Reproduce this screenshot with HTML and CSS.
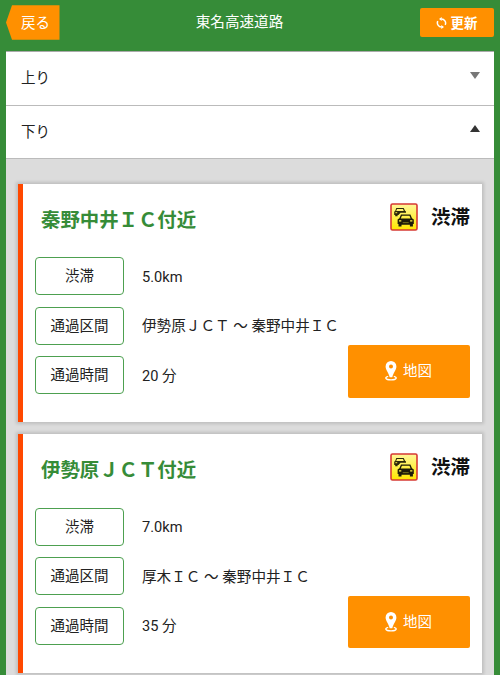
FILE: index.html
```html
<!DOCTYPE html>
<html lang="ja">
<head>
    <meta charset="UTF-8">
    <meta name="viewport" content="width=device-width, initial-scale=1.0">
    <title>東名高速道路</title>
    <link rel="stylesheet" href="styles.css">
</head>
<body>
    <svg class="symbols" width="0" height="0">
        <symbol id="jam" viewBox="0 0 28 28">
            <linearGradient id="jamBg" x1="0" y1="0" x2="0" y2="1">
                <stop offset="0" stop-color="#fff79a"/>
                <stop offset="0.5" stop-color="#fff04a"/>
                <stop offset="1" stop-color="#ffe600"/>
            </linearGradient>
            <rect x="1" y="1" width="26" height="26" rx="1.5" fill="url(#jamBg)" stroke="#d63a34" stroke-width="1.6"/>
            <path fill="#2a270a" fill-rule="evenodd" d="M6.3 5h7.4l1.3 2.8 1 .8v1.200H10.500L8.500 12H7.600v1.200H5.200V12H4.200V8.800l1.100-1zM7 6l-.8 1.900h7.600L13 6z"/>
            <path fill="#fff04a" d="M5.400 9.200h1.800v1H5.400z"/>
            <path fill="#1c1a08" fill-rule="evenodd" d="M11 11.600h9.400l1.600 3.700 1.800 1.200v4.600h-.9v2.300h-3v-1.700h-8.400v1.700h-3v-2.300h-.9v-4.600l1.800-1.200zM11.900 12.800l-1.100 2.700h9.800l-1.100-2.700z"/>
            <path fill="#fff04a" d="M9 17.300h2.300v1.300H9zM20.100 17.300h2.300v1.300h-2.300z"/>
            <path fill="#8a8420" d="M12.700 19.300h6v.8h-6z"/>
        </symbol>
        <symbol id="pin" viewBox="0 0 12 20">
            <path fill="#fff" fill-rule="evenodd" d="M6 0a5.400 5.400 0 0 1 5.400 5.400C11.400 8.800 8.300 11.500 7.300 16.300H4.700C3.700 11.500.6 8.800.6 5.400A5.400 5.400 0 0 1 6 0zM6 3.400a2 2 0 1 0 0 4 2 2 0 1 0 0-4z"/>
            <path fill="none" stroke="#fff" stroke-width="1.300" d="M3.200 15.300C-.4 16-.2 18.900 6 18.900s6.400-2.900 2.800-3.600"/>
        </symbol>
    </svg>

    <div class="header">
        <a class="back">戻る</a>
        <h1 class="page-title">東名高速道路</h1>
        <button class="reload">
            <svg width="11" height="12" viewBox="0 0 11 12">
                <path fill="none" stroke="#fff" stroke-width="1.500" d="M5.300 1.900A4.200 4.200 0 0 1 9.200 7.900M5.700 10.100A4.200 4.200 0 0 1 1.800 4.100"/>
                <path fill="#fff" d="M5.700 0v3.900L3 1.900zM5.300 8.100V12L8 10.100z"/>
            </svg>
            <span>更新</span>
        </button>
    </div>

    <div class="container">
        <div class="direction"><span>上り</span><i class="arrow down"></i></div>
        <div class="direction"><span>下り</span><i class="arrow up"></i></div>

        <div class="cards">
            <div class="card">
                <div class="card-head">
                    <h2 class="place">秦野中井ＩＣ付近</h2>
                    <svg class="jam-icon"><use href="#jam"/></svg>
                    <span class="status">渋滞</span>
                </div>
                <div class="card-body">
                    <div class="row"><span class="label">渋滞</span><span class="value">5.0km</span></div>
                    <div class="row"><span class="label">通過区間</span><span class="value">伊勢原ＪＣＴ ～ 秦野中井ＩＣ</span></div>
                    <div class="row"><span class="label">通過時間</span><span class="value">20 分</span></div>
                </div>
                <button class="map-button"><svg class="pin-icon"><use href="#pin"/></svg>地図</button>
            </div>

            <div class="card">
                <div class="card-head">
                    <h2 class="place">伊勢原ＪＣＴ付近</h2>
                    <svg class="jam-icon"><use href="#jam"/></svg>
                    <span class="status">渋滞</span>
                </div>
                <div class="card-body">
                    <div class="row"><span class="label">渋滞</span><span class="value">7.0km</span></div>
                    <div class="row"><span class="label">通過区間</span><span class="value">厚木ＩＣ ～ 秦野中井ＩＣ</span></div>
                    <div class="row"><span class="label">通過時間</span><span class="value">35 分</span></div>
                </div>
                <button class="map-button"><svg class="pin-icon"><use href="#pin"/></svg>地図</button>
            </div>
        </div>
    </div>
</body>
</html>
```

FILE: styles.css
```css
* {
    box-sizing: border-box;
}
body {
    margin: 0;
    height: 675px;
    overflow: hidden;
    background-color: #368c38;
    color: #222;
    font-family: Roboto, 'Noto Sans CJK JP', sans-serif;
    font-size: 14.5px;
    line-height: 20px;
}
.symbols {
    position: absolute;
}
h1, h2 {
    margin: 0;
}
button {
    border: none;
    padding: 0;
    color: #fff;
    background-color: #ff9000;
    border-radius: 2px;
    font-family: inherit;
    display: flex;
    align-items: center;
    justify-content: center;
}
.header {
    display: grid;
    grid-template-columns: 74px 1fr 74px;
    align-items: center;
    height: 51px;
    padding: 0 6px 6px;
}
.back {
    width: 53.5px;
    height: 34.5px;
    padding: 1px 0 0 15px;
    line-height: 35px;
    color: #fff;
    background-color: #ff9000;
    clip-path: polygon(0 50%, 6px 0, 100% 0, 100% 100%, 6px 100%);
}
.page-title {
    color: #fff;
    font-size: 14.6px;
    font-weight: normal;
    text-align: center;
    padding: 0 21px 1px 0;
}
.reload {
    height: 29px;
    padding-right: 1px;
    font-size: 13.4px;
    font-weight: bold;
    gap: 4px;
}
.reload span {
    margin-bottom: 2px;
}
.container {
    margin: 0 6px;
    height: 624px;
    overflow: hidden;
    background-color: #dcdcdc;
    border-top: 1px solid #aaa;
}
.direction {
    display: flex;
    justify-content: space-between;
    height: 54px;
    padding: 17px 14px 0 15px;
    background-color: #fff;
    border-bottom: 1px solid #bbb;
}
.direction + .direction {
    height: 53px;
}
.arrow {
    width: 0;
    height: 0;
    margin-top: 3px;
    border-left: 5px solid transparent;
    border-right: 5px solid transparent;
}
.down {
    border-top: 7px solid #777;
}
.up {
    margin-top: 2px;
    border-bottom: 7px solid #333;
}
.cards {
    display: flex;
    flex-direction: column;
    gap: 12px;
    padding: 25px 12px 0;
}
.card {
    flex: none;
    display: grid;
    grid-template-columns: 1fr 122px;
    grid-template-rows: 73.2px 1fr;
    height: 238.4px;
    padding-right: 12px;
    background-color: #fff;
    border-left: 5px solid #ff4800;
    box-shadow: 0 0 3px 2px rgba(0, 0, 0, 0.13);
}
.card-head {
    grid-column: 1 / 3;
    display: flex;
    align-items: flex-start;
    padding: 19px 0 0 18px;
}
.place {
    flex: 1;
    margin-top: 4px;
    font-size: 19.4px;
    line-height: 28px;
    color: #368c38;
}
.jam-icon {
    width: 28px;
    height: 28px;
    margin-right: 13px;
}
.status {
    margin-top: 1px;
    font-size: 19.5px;
    line-height: 28px;
    font-weight: bold;
    color: #111;
}
.card-body {
    grid-area: 2 / 1 / 3 / 3;
    display: flex;
    flex-direction: column;
    gap: 11.6px;
    padding-left: 12px;
}
.row {
    display: flex;
    align-items: center;
    gap: 18px;
    height: 38px;
}
.label {
    width: 89px;
    height: 38px;
    line-height: 37px;
    text-align: center;
    border: 1px solid #4da050;
    border-radius: 4px;
}
.value {
    padding-top: 1px;
    font-size: 14.6px;
}
.map-button {
    grid-area: 2 / 2 / 3 / 3;
    height: 52.5px;
    margin-top: 88px;
    padding: 0 1px 3px 0;
    font-size: 14.5px;
    gap: 6px;
}
.pin-icon {
    width: 12px;
    height: 20px;
    margin-top: 3px;
}
```
